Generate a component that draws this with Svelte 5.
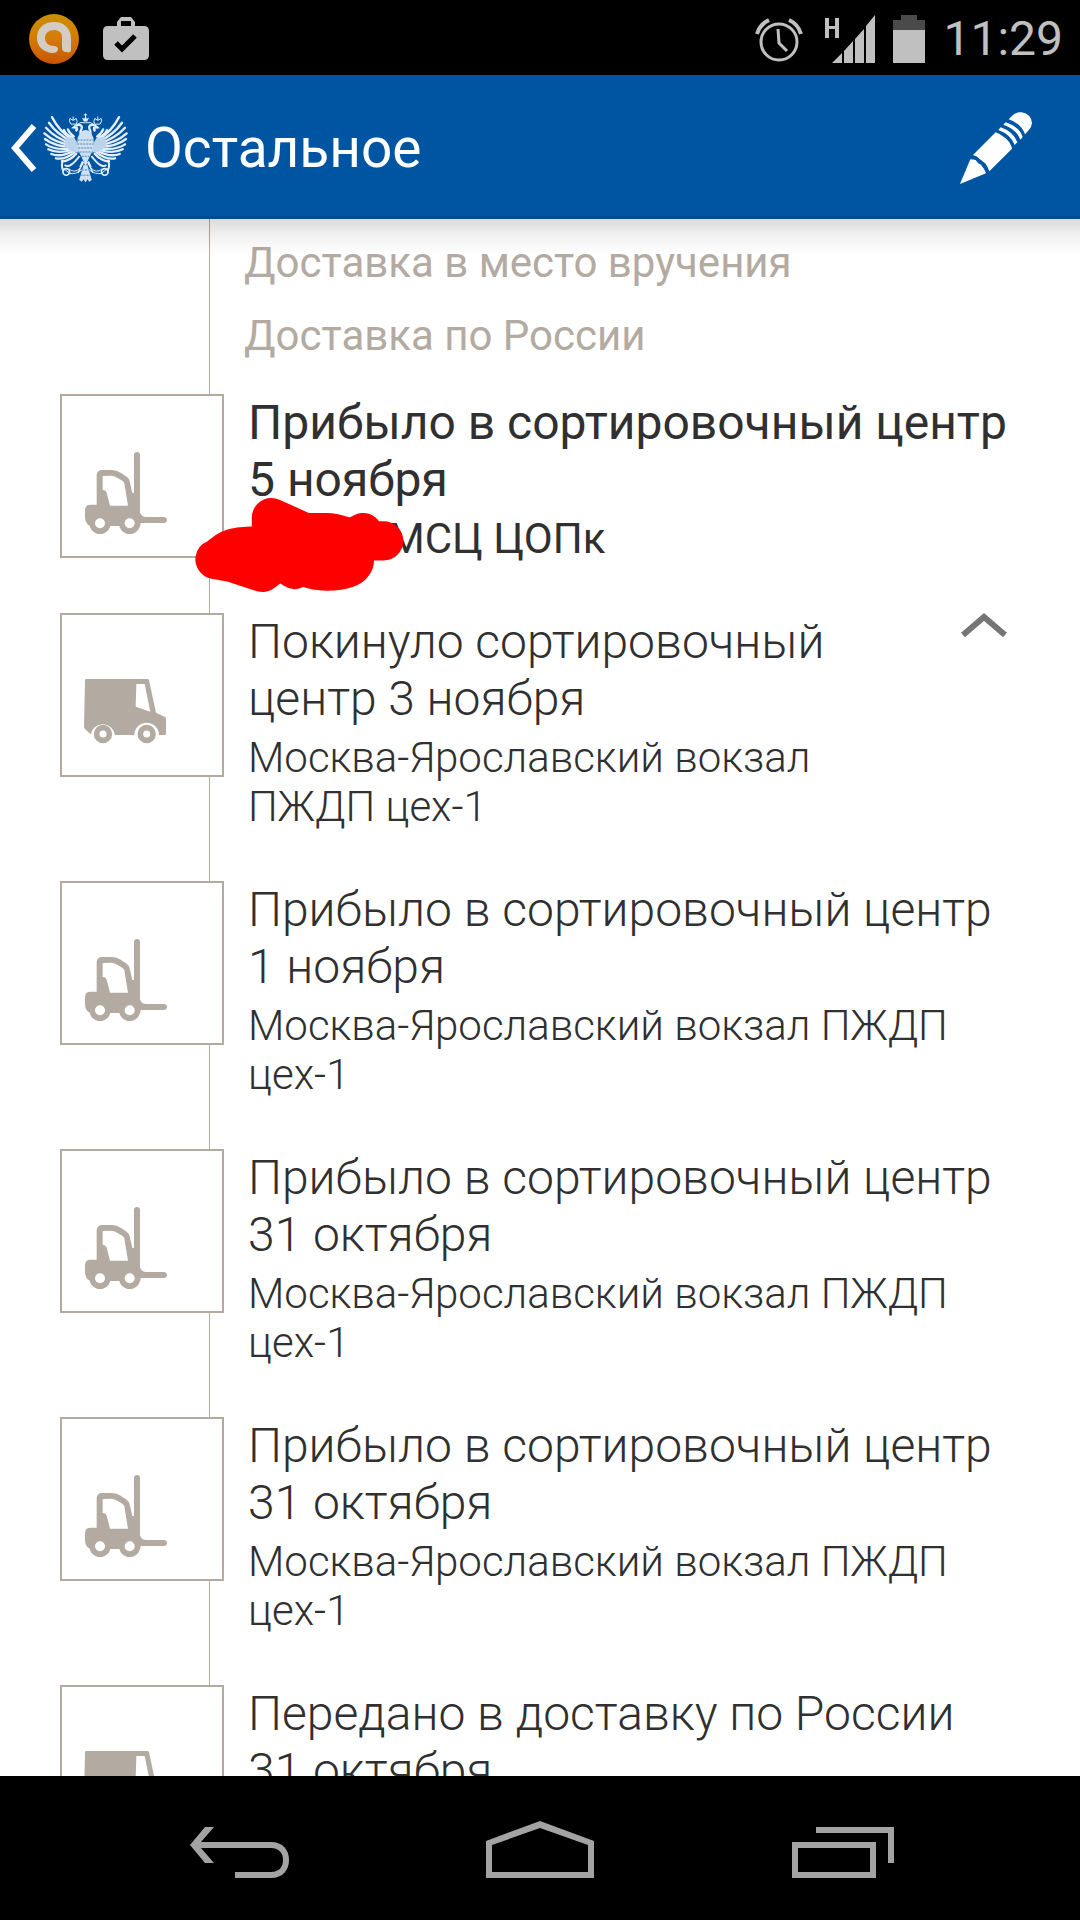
<script>
	let expanded = true;

	const pendingStages = ['Доставка в место вручения', 'Доставка по России'];

	const events = [
		{
			icon: 'forklift',
			title: 'Прибыло в сортировочный центр',
			date: '5 ноября',
			place: 'МСЦ ЦОПк',
			current: true,
			redacted: true
		},
		{
			icon: 'van',
			title: 'Покинуло сортировочный центр',
			date: '3 ноября',
			place: 'Москва-Ярославский вокзал ПЖДП цех-1',
			toggle: true
		},
		{
			icon: 'forklift',
			title: 'Прибыло в сортировочный центр',
			date: '1 ноября',
			place: 'Москва-Ярославский вокзал ПЖДП цех-1'
		},
		{
			icon: 'forklift',
			title: 'Прибыло в сортировочный центр',
			date: '31 октября',
			place: 'Москва-Ярославский вокзал ПЖДП цех-1'
		},
		{
			icon: 'forklift',
			title: 'Прибыло в сортировочный центр',
			date: '31 октября',
			place: 'Москва-Ярославский вокзал ПЖДП цех-1'
		},
		{
			icon: 'van',
			title: 'Передано в доставку по России',
			date: '31 октября'
		}
	];

	// long flight feathers of one wing: start point, bend, tip
	const feathers = [
		'M217 418Q176 392 154 349',
		'M215 423Q170 402 145 366',
		'M213 428Q166 414 136 381',
		'M212 433Q162 426 131 398',
		'M212 438Q162 438 133 415',
		'M213 443Q164 450 136 431',
		'M215 447Q172 461 143 446',
		'M218 451Q182 471 152 460',
		'M222 455Q194 478 166 473',
		'M227 459Q208 481 184 482'
	];
</script>

<div class="screen">
	<div class="status-bar">
		<div class="status-group">
			<svg viewBox="0 0 50 50" width="50" height="50" aria-hidden="true">
				<defs>
					<linearGradient id="orange" x1="0" y1="0" x2="0" y2="1">
						<stop offset="0" stop-color="#c99100" />
						<stop offset="0.5" stop-color="#d57a08" />
						<stop offset="1" stop-color="#c95400" />
					</linearGradient>
				</defs>
				<circle cx="25" cy="25" r="25" fill="url(#orange)" />
				<path
					d="M8 24C8 14 15 8 25 8C35 8 42 14 42 25V36C42 38 40 39 38 38C34 38 33 36 33 33V23C33 18 29 16 25 16C20 16 16 19 16 24C16 29 20 32 25 32C27 32 29 33 29 35C29 38 26 39 23 39C14 38 8 32 8 24Z"
					fill="#d2ccc5"
				/>
			</svg>
			<svg viewBox="0 0 46 46" width="46" height="46" aria-hidden="true">
				<path
					d="M5 10H14V6L18 1H28L32 6V10H41Q46 10 46 15V39Q46 44 41 44H5Q0 44 0 39V15Q0 10 5 10ZM18 10H28V5H18Z"
					fill="#c0c0c0"
					fill-rule="evenodd"
				/>
				<path d="M13 27L19 33L32 20" fill="none" stroke="#000" stroke-width="5" />
			</svg>
		</div>
		<div class="status-group right">
			<svg viewBox="0 0 48 48" width="48" height="48" aria-hidden="true">
				<g fill="none" stroke="#c0c0c0">
					<circle cx="24" cy="27" r="18" stroke-width="3" />
					<path d="M23 14L24 28L32 36" stroke-width="3" />
					<path d="M2 19Q5 9 14 5M34 5Q43 9 46 19" stroke-width="4" />
				</g>
			</svg>
			<svg class="signal" viewBox="0 0 50 48" width="50" height="48" aria-hidden="true">
				<g fill="#c0c0c0">
					<path d="M0 3H4V11H10V3H14V23H10V14H4V23H0Z" />
					<path d="M7 48L17 38V48ZM19 36L28 26V48H19ZM30 24L39 14V48H30ZM41 11L50 0V48H41Z" />
				</g>
			</svg>
			<svg viewBox="0 0 32 48" width="32" height="48" aria-hidden="true">
				<path d="M0 5H8V0H24V5H32V15H0Z" fill="#4a4a4a" />
				<path d="M0 15H32V48H0Z" fill="#c0c0c0" />
			</svg>
			<time>11:29</time>
		</div>
	</div>

	<header class="app-bar">
		<button class="up" aria-label="Назад">
			<svg viewBox="0 0 26 48" width="26" height="48">
				<path d="M23 2L4 24L23 46" fill="none" stroke="#fff" stroke-width="6" />
			</svg>
			<svg class="logo" viewBox="127 337 256 210" width="85" height="70">
				<defs>
					<g id="wing">
						{#each feathers as d}
							<path {d} />
						{/each}
						<path d="M216 412Q196 402 190 388M220 407Q206 398 202 386" />
						<path d="M196 408L222 412L236 436L234 456L212 452L192 436Z" fill="#bcd3ec" stroke="none" />
					</g>
					<g id="side" fill="none" stroke="#e4eefa">
						<path d="M208 353Q204 361 211 370H228Q232 361 227 353L218 359Z" stroke-width="3" />
						<path d="M218 347V358" stroke-width="3" />
						<path
							d="M247 405Q236 402 241 389Q248 378 239 373Q228 370 219 380L229 381Q231 387 225 391"
							stroke-width="7"
						/>
						<path d="M237 466Q223 485 211 493Q201 500 192 493" stroke-width="6" />
						<path d="M187 479Q180 496 189 512" stroke-width="6" />
						<circle cx="197" cy="514" r="10" stroke-width="5" />
						<path d="M205 505Q222 520 239 502M206 518Q225 523 245 507M189 504L209 520" stroke-width="3" />
						<path d="M249 484L232 517M246 482L238 500" stroke-width="4" />
					</g>
				</defs>
				<g fill="none" stroke="#e4eefa" stroke-width="7" stroke-linecap="round">
					<use href="#wing" />
					<use href="#wing" transform="translate(510 0) scale(-1 1)" />
				</g>
				<use href="#side" />
				<use href="#side" transform="translate(510 0) scale(-1 1)" />
				<path d="M244 350L250 362H260L266 350L259 354L255 346L251 354Z" fill="#e4eefa" />
				<path
					d="M255 338V349M250 342H260M228 372Q240 362 255 366Q270 362 282 372"
					fill="none"
					stroke="#e4eefa"
					stroke-width="3"
				/>
				<path
					d="M240 393Q255 382 270 393L279 412Q283 445 268 467L259 487L274 538L266 544L261 536L255 546L249 536L244 544L236 538L251 487L242 467Q227 445 231 412Z"
					fill="#cfe0f3"
				/>
				<path
					d="M231 418H279M230 430H280M233 442H277M237 454H273M244 467H266M248 492H262M244 508H266M240 524H270"
					fill="none"
					stroke="#4b86c2"
					stroke-width="3"
					stroke-dasharray="6 3"
				/>
			</svg>
			<span>Остальное</span>
		</button>
		<button class="edit" aria-label="Изменить">
			<svg viewBox="780 332 216 216" width="72" height="72">
				<g fill="#fff">
					<path d="M780 548L811 474Q820 474 827 476Q832 486 843 490Q852 500 858 516Z" />
					<path d="M819 461L887 393Q900 397 916 410Q933 425 936 442L868 510Q864 497 857 487L838 472Q832 465 819 461Z" />
					<path d="M895 386L902 378Q940 391 952 423L944 431Q933 400 895 386Z" />
					<path d="M910 370L917 363Q958 376 968 407L961 415Q950 384 910 370Z" />
					<path d="M926 354L938 342Q950 331 965 333Q993 338 996 365Q995 378 986 387L975 399Q963 366 926 354Z" />
				</g>
			</svg>
		</button>
	</header>

	<main>
		<ul class="pending">
			{#each pendingStages as stage}
				<li>{stage}</li>
			{/each}
		</ul>

		<ol class="events">
			{#each events as event}
				<li class="event" class:current={event.current}>
					<div class="icon-box">
						{#if event.icon === 'forklift'}
							<svg viewBox="135 216 246 246" width="82" height="82" aria-hidden="true">
								<g fill="#b3aaa2">
									<path
										d="M282 224Q283 216 291 216Q299 216 300 224V397Q304 411 318 411H371Q381 412 381 420Q381 429 371 429H301V438H152Q135 432 135 412V390Q136 374 151 374H170V286Q171 270 187 270H216Q230 270 242 278L260 290Q267 295 269 304L277 339H282ZM188 288V330Q197 329 200 338L210 377H264L253 310Q252 305 247 302L226 290Q220 287 212 287Z"
										fill-rule="evenodd"
									/>
									<circle cx="180" cy="430" r="32" />
									<circle cx="269" cy="430" r="32" />
								</g>
								<circle cx="180" cy="430" r="15" fill="#fff" />
								<circle cx="269" cy="430" r="15" fill="#fff" />
							</svg>
						{:else}
							<svg viewBox="135 213 246 246" width="82" height="82" aria-hidden="true">
								<path
									d="M135 240Q135 237 139 237H322Q326 237 327 241L348 338L375 351Q378 353 378 357V402Q378 405 374 405H357A37 37 0 0 0 283 405H225A37 37 0 0 0 152 403L134 386Q132 384 132 380ZM289 252L287 320L331 335L314 252Z"
									fill="#b3aaa2"
									fill-rule="evenodd"
								/>
								<g fill="#fff" stroke="#b3aaa2" stroke-width="17">
									<circle cx="189" cy="402" r="19" />
									<circle cx="320" cy="402" r="19" />
								</g>
							</svg>
						{/if}
					</div>
					<div class="details">
						<h2>{event.title} <span class="date">{event.date}</span></h2>
						{#if event.place}
							<p>
								{#if event.redacted}
									<span class="redacted">
										<svg viewBox="46 53 627 283" width="209" height="94" aria-hidden="true">
											<path
												d="M105 238C125 230 135 205 175 201L215 198H275V112L375 157H440C470 157 490 168 515 176L551 157L560 182H613H525V240C525 262 490 273 440 273C400 273 385 262 370 258L345 268L310 245H290L248 277L160 248Z"
												fill="#f00"
												stroke="#f00"
												stroke-width="118"
												stroke-linejoin="round"
											/>
										</svg>
									</span>
								{/if}{event.place}
							</p>
						{/if}
					</div>
					{#if event.toggle}
						<button
							class="toggle"
							aria-label="Свернуть"
							aria-expanded={expanded}
							on:click={() => (expanded = !expanded)}
						>
							<svg viewBox="0 0 46 26" width="46" height="26">
								<path d="M2 23L23 5L44 23" fill="none" stroke="#757575" stroke-width="6" />
							</svg>
						</button>
					{/if}
				</li>
			{/each}
		</ol>
	</main>

	<nav>
		<button aria-label="Назад">
			<svg viewBox="0 0 108 60" width="108" height="60">
				<path d="M19 9H28L15 24H85C97 24 103 32 103 42C103 52 97 60 85 60H49V54H85C93 54 97 49 97 42C97 35 93 30 85 30H15L28 45H19L4 27Z" />
			</svg>
		</button>
		<button aria-label="Домой">
			<svg viewBox="0 0 108 60" width="108" height="60">
				<path d="M0 23L54 3L108 23V60H0ZM6 27V54H102V27L54 10Z" fill-rule="evenodd" />
			</svg>
		</button>
		<button aria-label="Недавние">
			<svg viewBox="0 0 108 60" width="108" height="60">
				<path d="M6 24H90V60H6ZM12 30V54H84V30ZM30 9H108V45H102V15H30Z" fill-rule="evenodd" />
			</svg>
		</button>
	</nav>
</div>

<style>
	:global(body) {
		background: #000;
		font-family: Roboto, 'Noto Sans', sans-serif;
	}

	button {
		display: flex;
		align-items: center;
		padding: 0;
		border: 0;
		background: none;
		color: inherit;
		font: inherit;
		cursor: pointer;
	}
	svg {
		display: block;
		flex: none;
		overflow: visible;
	}
	ul,
	ol {
		margin: 0;
		padding: 0;
		list-style: none;
	}

	.screen {
		display: flex;
		flex-direction: column;
		height: 100vh;
	}

	/* --- Status bar --- */
	.status-bar {
		display: flex;
		justify-content: space-between;
		align-items: center;
		flex: none;
		box-sizing: border-box;
		height: 75px;
		padding: 2px 17px 0 29px;
		background: #000;
		color: #c0c0c0;
	}
	.status-group {
		display: flex;
		align-items: center;
		gap: 24px;
	}
	.status-group.right {
		gap: 18px;
	}
	.status-group time {
		font-size: 48px;
		line-height: 57px;
	}
	.signal {
		margin-left: 4px;
	}

	/* --- App bar --- */
	.app-bar {
		position: relative;
		display: flex;
		justify-content: space-between;
		flex: none;
		box-sizing: border-box;
		height: 144px;
		padding: 2px 48px 0 11px;
		background: #0055a3;
		box-shadow: inset 0 -3px #04498a;
		color: #fff;
		font-size: 55px;
	}
	.app-bar::after {
		content: '';
		position: absolute;
		top: 100%;
		left: 0;
		right: 0;
		height: 36px;
		background: linear-gradient(rgba(0, 0, 0, 0.14), rgba(0, 0, 0, 0.05) 50%, rgba(0, 0, 0, 0));
	}
	.logo {
		margin: 0 17px 0 6px;
	}

	/* --- Tracking history --- */
	main {
		flex: 1;
		min-height: 0;
		overflow: hidden;
		background: linear-gradient(#b3aaa2, #b3aaa2) 209px 0 / 1px 100% no-repeat #fff;
	}
	.pending {
		display: flex;
		flex-direction: column;
		gap: 24px;
		padding: 19px 48px 34px 244px;
		color: #b3aaa2;
		font-size: 42px;
		line-height: 49px;
	}
	.event {
		display: flex;
		align-items: flex-start;
		gap: 24px;
		padding: 0 60px 50px;
		color: #303030;
		font-weight: 300;
	}
	.event.current {
		font-weight: 400;
	}
	.icon-box {
		display: flex;
		align-items: flex-end;
		flex: none;
		box-sizing: border-box;
		width: 164px;
		height: 164px;
		padding: 0 0 22px 23px;
		border: 2px solid #b3aaa2;
		background: #fff;
	}
	.details {
		flex: 1;
	}
	h2 {
		margin: 0 0 6px;
		font-size: 48px;
		font-weight: inherit;
		line-height: 57px;
	}
	.date {
		white-space: nowrap;
	}
	p {
		margin: 0;
		font-size: 42px;
		line-height: 49px;
	}
	.redacted {
		position: relative;
		display: inline-block;
		width: 140px;
	}
	.redacted svg {
		position: absolute;
		left: -53px;
		bottom: -39px;
	}
	.toggle {
		justify-content: center;
		width: 72px;
		height: 24px;
	}

	/* --- Navigation bar --- */
	nav {
		display: flex;
		flex: none;
		height: 144px;
		padding: 0 90px;
		background: #000;
	}
	nav button {
		flex: 1;
		justify-content: center;
	}
	nav path {
		fill: #a3a3a3;
	}
</style>
